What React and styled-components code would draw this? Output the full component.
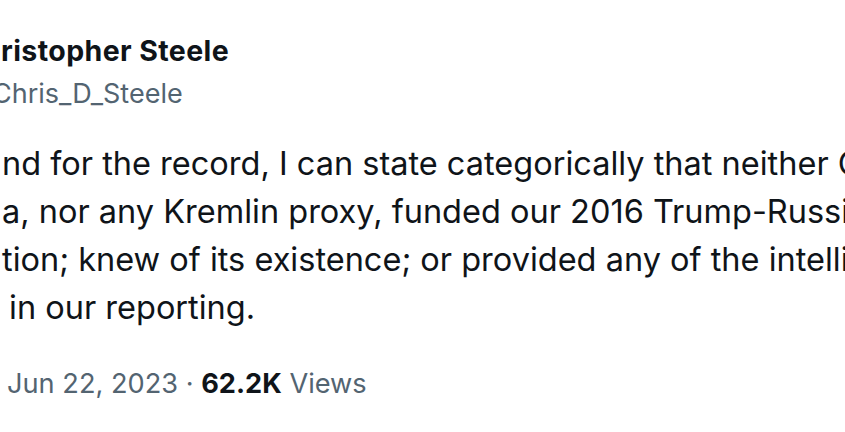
import React from "react";
import styled, { createGlobalStyle } from "styled-components";

const GlobalStyle = createGlobalStyle`
  html, body {
    margin: 0;
    padding: 0;
    background: #fff;
    overflow: hidden;
  }
  body {
    font-family: Inter, "Noto Sans", "Liberation Sans", sans-serif;
    -webkit-font-smoothing: antialiased;
  }
`;

const Page = styled.div`
  width: 845px;
  height: 432px;
  overflow: hidden;
  padding-top: 34px;
  box-sizing: border-box;
`;

const Author = styled.div`
  display: flex;
  flex-direction: column;
  gap: 9px;
`;

const Name = styled.div`
  font-size: 28.5px;
  line-height: 34px;
  font-weight: 700;
  letter-spacing: 0.4px;
  color: #0f1419;
  white-space: nowrap;
  margin-left: ${p => p.$offset || 0}px;
`;

const Handle = styled.div`
  font-size: 27px;
  line-height: 34px;
  color: #536471;
  white-space: nowrap;
  margin-left: ${p => p.$offset || 0}px;
`;

const Body = styled.div`
  margin-top: 29px;
  font-size: 32.5px;
  line-height: 48px;
  color: #0f1419;
`;

const Line = styled.div`
  white-space: nowrap;
  margin-left: ${p => p.$offset || 0}px;
`;

const Meta = styled.div`
  margin-top: 35px;
  margin-left: 7px;
  font-size: 27.2px;
  line-height: 34px;
  color: #536471;
  white-space: nowrap;
`;

const Views = styled.span`
  font-weight: 700;
  color: #0f1419;
`;

export default function App() {
  return (
    <>
      <GlobalStyle />
      <Page>
        <Author>
          <Name $offset={1}>ristopher Steele</Name>
          <Handle $offset={-8}>Chris_D_Steele</Handle>
        </Author>
        <Body>
          <Line $offset={2}>nd for the record, I can state categorically that neither Oleg</Line>
          <Line $offset={2}>a, nor any Kremlin proxy, funded our 2016 Trump-Russia</Line>
          <Line $offset={2}>tion; knew of its existence; or provided any of the intelligence</Line>
          <Line $offset={-20}>d in our reporting.</Line>
        </Body>
        <Meta>
          Jun 22, 2023 · <Views>62.2K</Views> Views
        </Meta>
      </Page>
    </>
  );
}
